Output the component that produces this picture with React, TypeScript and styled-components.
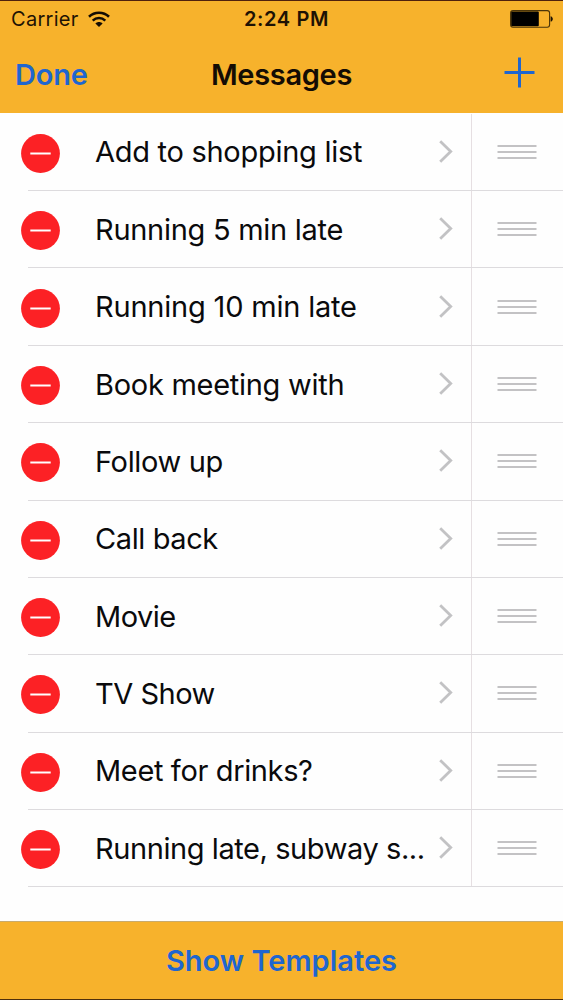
import React from "react";
import styled, { createGlobalStyle } from "styled-components";

const AMBER = "#f7b22c";
const BLUE = "#1f66cf";

const GlobalStyle = createGlobalStyle`
  * { box-sizing: border-box; }
  body { margin: 0; background: #fefefe; }
`;

const Screen = styled.div`
  width: 563px;
  height: 1000px;
  display: flex;
  flex-direction: column;
  overflow: hidden;
  background: #fefefe;
  color: #0a0a0c;
  font-family: Inter, "Liberation Sans", sans-serif;
`;

const Header = styled.header`
  flex: none;
  height: 113px;
  background: ${AMBER};
  border-top: 1px solid #50200c;
`;

const StatusBar = styled.div`
  display: grid;
  grid-template-columns: 1fr auto 1fr;
  align-items: center;
  height: 36px;
  padding: 0 10px 0 11px;
  color: #1e1204;
`;

const Carrier = styled.div`
  display: flex;
  align-items: center;
  gap: 9px;
  font-size: 20px;
  letter-spacing: 0.3px;
`;

const Clock = styled.div`
  font-size: 20px;
  font-weight: 600;
  letter-spacing: 0.65px;
  padding-left: 9px;
`;

const BatteryIcon = styled.svg`
  justify-self: end;
`;

const NavBar = styled.div`
  display: grid;
  grid-template-columns: 1fr auto 1fr;
  align-items: center;
  height: 76px;
  padding: 0 28px 0 15px;
`;

const TextButton = styled.button<{ $spacing: number }>`
  justify-self: start;
  padding: 0;
  border: 0;
  background: none;
  color: ${BLUE};
  font: 600 29px/34px Inter, "Liberation Sans", sans-serif;
  letter-spacing: ${(p) => p.$spacing}px;
`;

const IconButton = styled.button`
  justify-self: end;
  display: flex;
  padding: 0 0 5px;
  border: 0;
  background: none;
  color: ${BLUE};
`;

const Title = styled.h1`
  margin: 0;
  padding-left: 13px;
  color: #140c04;
  font-size: 29px;
  line-height: 34px;
  font-weight: 600;
  letter-spacing: -0.3px;
`;

const List = styled.ul`
  flex: 1;
  margin: 0;
  padding: 0.8px 0 0;
  list-style: none;
`;

const Row = styled.li`
  display: flex;
  height: 77.35px;
  padding-left: 28px;
`;

const RowBody = styled.div`
  flex: 1;
  min-width: 0;
  display: flex;
  align-items: center;
  border-bottom: 1px solid #dddbde;
`;

const DeleteButton = styled.button`
  flex: none;
  display: flex;
  margin: 3px 35px 0 -7px;
  padding: 0;
  border: 0;
  background: none;
`;

const Label = styled.span<{ $spacing: number }>`
  flex: 1;
  min-width: 0;
  padding-top: 1px;
  font-size: 29px;
  line-height: 38px;
  white-space: nowrap;
  letter-spacing: ${(p) => p.$spacing}px;
`;

const Chevron = styled.svg`
  flex: none;
  margin: 0 18px 1px 0;
`;

const Handle = styled.div`
  flex: none;
  align-self: stretch;
  display: flex;
  align-items: center;
  width: 92px;
  padding-left: 25px;
  border-left: 1px solid #e6dfe2;
`;

const Toolbar = styled.footer`
  flex: none;
  display: flex;
  justify-content: center;
  align-items: center;
  height: 79px;
  background: ${AMBER};
  border-top: 1px solid #c9ab6c;
  border-bottom: 1px solid #50300c;
`;

const messages: { text: string; spacing: number }[] = [
  { text: "Add to shopping list", spacing: -0.28 },
  { text: "Running 5 min late", spacing: -0.28 },
  { text: "Running 10 min late", spacing: -0.2 },
  { text: "Book meeting with", spacing: -0.28 },
  { text: "Follow up", spacing: -0.35 },
  { text: "Call back", spacing: -0.4 },
  { text: "Movie", spacing: -0.55 },
  { text: "TV Show", spacing: -0.5 },
  { text: "Meet for drinks?", spacing: -0.36 },
  { text: "Running late, subway s...", spacing: -0.42 },
];

const Wifi = () => (
  <svg width="22" height="17" viewBox="0 0 22 17" fill="none" stroke="#140c04">
    <path d="M1 5.8C6.6.4 15.4.4 21 5.8" strokeWidth="2.6" />
    <path d="M4.7 9.6C8.3 6.2 13.7 6.2 17.3 9.6" strokeWidth="2.5" />
    <path d="M7.4 12.5C9.4 10.5 12.6 10.5 14.6 12.5L11 16Z" fill="#140c04" stroke="none" />
  </svg>
);

const Battery = () => (
  <BatteryIcon width="43" height="18" viewBox="0 0 43 18">
    <rect x=".6" y=".6" width="39" height="16.6" rx="2.4" fill="none" stroke="#4a3408" strokeWidth="1.1" />
    <rect x="1.2" y="1.6" width="27.6" height="14.6" rx="1" fill="#000" />
    <path d="M40.6 6.2c1.2.2 2.2 1.3 2.2 2.7s-1 2.5-2.2 2.7z" fill="#1e1204" />
  </BatteryIcon>
);

export default function App() {
  return (
    <>
      <GlobalStyle />
      <Screen>
        <Header>
          <StatusBar>
            <Carrier>
              <span>Carrier</span>
              <Wifi />
            </Carrier>
            <Clock>2:24 PM</Clock>
            <Battery />
          </StatusBar>
          <NavBar>
            <TextButton $spacing={-0.2}>Done</TextButton>
            <Title>Messages</Title>
            <IconButton aria-label="Add">
              <svg width="31" height="31" viewBox="0 0 31 31" stroke="currentColor" strokeWidth="3">
                <path d="M15.5 .5v30M.5 15.5h30" />
              </svg>
            </IconButton>
          </NavBar>
        </Header>
        <List>
          {messages.map((m) => (
            <Row key={m.text}>
              <RowBody>
                <DeleteButton aria-label="Delete">
                  <svg width="39" height="39" viewBox="0 0 39 39">
                    <circle cx="19.5" cy="19.5" r="19.4" fill="#fc2125" />
                    <path d="M9.3 19.5h20.4" stroke="#fff" strokeWidth="2" />
                  </svg>
                </DeleteButton>
                <Label $spacing={m.spacing}>{m.text}</Label>
                <Chevron width="14" height="23" viewBox="0 0 14 23" fill="none" stroke="#c2c2c4" strokeWidth="2.8">
                  <path d="M1.2 1.2L11.7 11.5L1.2 21.8" />
                </Chevron>
                <Handle>
                  <svg width="40" height="16" viewBox="0 0 40 16" stroke="#c3c2c4" strokeWidth="2.1">
                    <path d="M.5 2h39M.5 8h39M.5 14h39" />
                  </svg>
                </Handle>
              </RowBody>
            </Row>
          ))}
        </List>
        <Toolbar>
          <TextButton $spacing={0}>Show Templates</TextButton>
        </Toolbar>
      </Screen>
    </>
  );
}
